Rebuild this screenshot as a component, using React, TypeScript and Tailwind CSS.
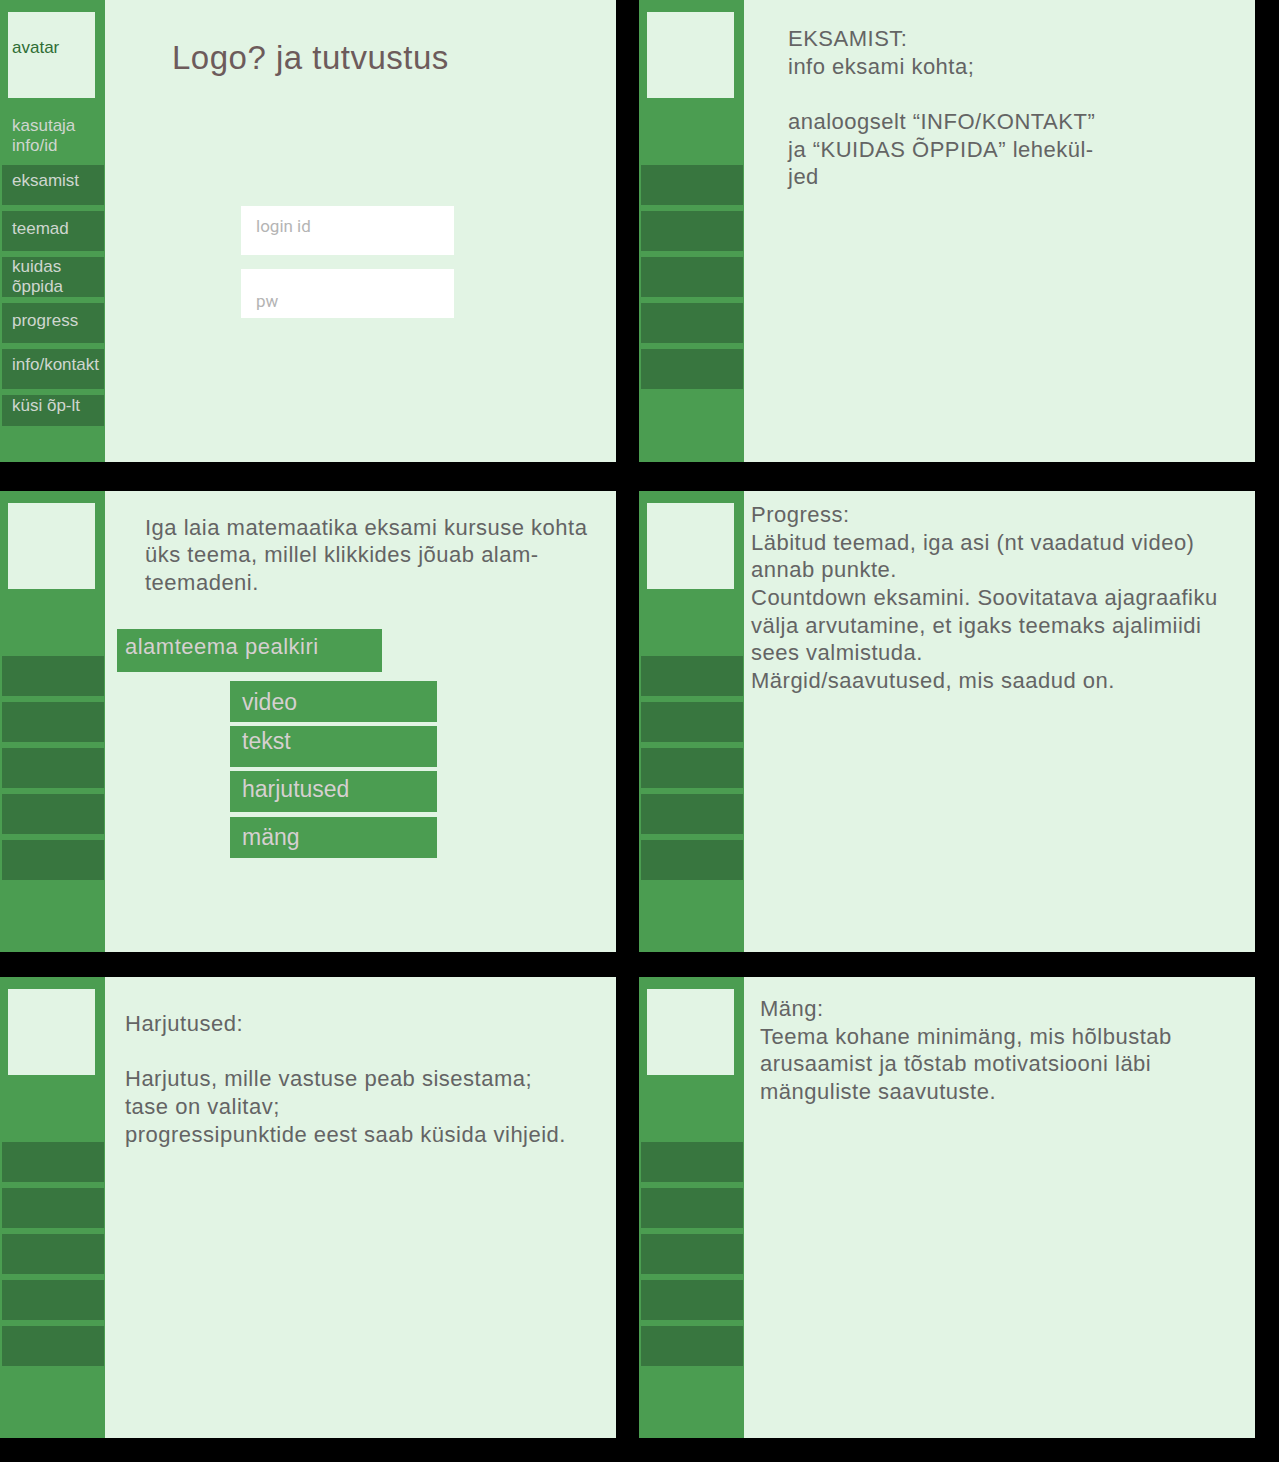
import React from "react";

const body =
  "font-['Liberation_Sans',Arial,sans-serif] text-[22px] leading-[27.7px] tracking-[0.5px] text-[#646464] whitespace-nowrap";

type NavItem = { label: string[]; pt: string; h?: string };

const navItems: NavItem[] = [
  { label: ["eksamist"], pt: "pt-[6px]" },
  { label: ["teemad"], pt: "pt-[8px]" },
  { label: ["kuidas", "õppida"], pt: "pt-0" },
  { label: ["progress"], pt: "pt-[8px]" },
  { label: ["info/kontakt"], pt: "pt-[6px]" },
  { label: ["küsi õp-lt"], pt: "pt-[1px]", h: "h-[31px]" },
];

const Sidebar = ({ first = false }: { first?: boolean }) => {
  return (
    <div className="w-[105px] shrink-0 bg-[#4b9d51] flex flex-col font-['Liberation_Sans',Arial,sans-serif] text-[17px] leading-[20.4px]">
      <div className="ml-[8px] mt-[12px] h-[86px] w-[87px] bg-[#e2f4e4] pl-[4px] pt-[25.5px] text-[#2f6d35]">
        {first && "avatar"}
      </div>

      <div className="h-[67px] pl-[12px] pt-[18px] text-[#cfd6cf]">
        {first && (
          <>
            <div>kasutaja</div>
            <div>info/id</div>
          </>
        )}
      </div>

      <div className="flex flex-col gap-[6px]">
        {first
          ? navItems.map((item) => (
              <div
                key={item.label.join()}
                className={`ml-[2px] w-[102px] bg-[#38763f] pl-[10px] text-[#cfd6cf] ${item.h ?? "h-[40px]"} ${item.pt}`}
              >
                {item.label.map((l) => (
                  <div key={l} className="whitespace-nowrap">
                    {l}
                  </div>
                ))}
              </div>
            ))
          : [1, 2, 3, 4, 5].map((n) => (
              <div key={n} className="ml-[2px] w-[102px] h-[40px] bg-[#38763f]" />
            ))}
      </div>
    </div>
  );
};

const Panel = ({
  first,
  h,
  children,
}: {
  first?: boolean;
  h: string;
  children: React.ReactNode;
}) => {
  return (
    <div className={`flex w-[616px] ${h}`}>
      <Sidebar first={first} />
      <div className="flex-1 bg-[#e2f4e4] overflow-hidden">{children}</div>
    </div>
  );
};

const Lines = ({ lines }: { lines: string[] }) => (
  <div className={body}>
    {lines.map((line, i) => (
      <div key={i} className="h-[27.7px]">
        {line}
      </div>
    ))}
  </div>
);

const subTopics = [
  { label: "video", pt: "pt-[8.5px]", mt: "mt-[9px]" },
  { label: "tekst", pt: "pt-[2.5px]", mt: "mt-[4px]" },
  { label: "harjutused", pt: "pt-[5px]", mt: "mt-[4px]" },
  { label: "mäng", pt: "pt-[7px]", mt: "mt-[5px]" },
];

export default function App() {
  return (
    <div className="min-h-[1462px] w-[1279px] bg-black">
      <div className="flex gap-[23px]">
        <Panel first h="h-[462px]">
          <div className="pl-[67px] pt-[38px] font-['Liberation_Sans',Arial,sans-serif] text-[33px] leading-[40px] tracking-[0.5px] text-[#6d5b5b] whitespace-nowrap">
            Logo? ja tutvustus
          </div>
          <div className="ml-[136px] mt-[128px] flex flex-col gap-[14px] font-['Roboto',Arial,sans-serif] text-[17px] leading-[20px] text-[#b4b4b4]">
            <div className="h-[49px] w-[213px] bg-white pl-[15px] pt-[10px]">login id</div>
            <div className="h-[49px] w-[213px] bg-white pl-[15px] pt-[22px]">pw</div>
          </div>
        </Panel>

        <Panel h="h-[462px]">
          <div className="pl-[44px] pt-[25px]">
            <Lines
              lines={[
                "EKSAMIST:",
                "info eksami kohta;",
                "",
                "analoogselt “INFO/KONTAKT”",
                "ja “KUIDAS ÕPPIDA” lehekül-",
                "jed",
              ]}
            />
          </div>
        </Panel>
      </div>

      <div className="mt-[29px] flex gap-[23px]">
        <Panel h="h-[461px]">
          <div className="pt-[22.5px]">
            <div className="pl-[40px]">
              <Lines
                lines={[
                  "Iga laia matemaatika eksami kursuse kohta",
                  "üks teema, millel klikkides jõuab alam-",
                  "teemadeni.",
                ]}
              />
            </div>
            <div className="ml-[12px] mt-[32px] h-[43px] w-[265px] bg-[#4b9d51] pl-[8px] pt-[4px] font-['Liberation_Sans',Arial,sans-serif] text-[22px] leading-[27px] tracking-[0.5px] text-[#d6d0d0] whitespace-nowrap">
              alamteema pealkiri
            </div>
            {subTopics.map((t) => (
              <div
                key={t.label}
                className={`ml-[125px] h-[41px] w-[207px] bg-[#4b9d51] pl-[12px] font-['Liberation_Sans',Arial,sans-serif] text-[23px] leading-[27.6px] text-[#d6d0d0] ${t.mt} ${t.pt}`}
              >
                {t.label}
              </div>
            ))}
          </div>
        </Panel>

        <Panel h="h-[461px]">
          <div className="pl-[7px] pt-[10px]">
            <Lines
              lines={[
                "Progress:",
                "Läbitud teemad, iga asi (nt vaadatud video)",
                "annab punkte.",
                "Countdown eksamini. Soovitatava ajagraafiku",
                "välja arvutamine, et igaks teemaks ajalimiidi",
                "sees valmistuda.",
                "Märgid/saavutused, mis saadud on.",
              ]}
            />
          </div>
        </Panel>
      </div>

      <div className="mt-[25px] flex gap-[23px]">
        <Panel h="h-[461px]">
          <div className="pl-[20px] pt-[33px]">
            <Lines
              lines={[
                "Harjutused:",
                "",
                "Harjutus, mille vastuse peab sisestama;",
                "tase on valitav;",
                "progressipunktide eest saab küsida vihjeid.",
              ]}
            />
          </div>
        </Panel>

        <Panel h="h-[461px]">
          <div className="pl-[16px] pt-[18px]">
            <Lines
              lines={[
                "Mäng:",
                "Teema kohane minimäng, mis hõlbustab",
                "arusaamist ja tõstab motivatsiooni läbi",
                "mänguliste saavutuste.",
              ]}
            />
          </div>
        </Panel>
      </div>
    </div>
  );
}
